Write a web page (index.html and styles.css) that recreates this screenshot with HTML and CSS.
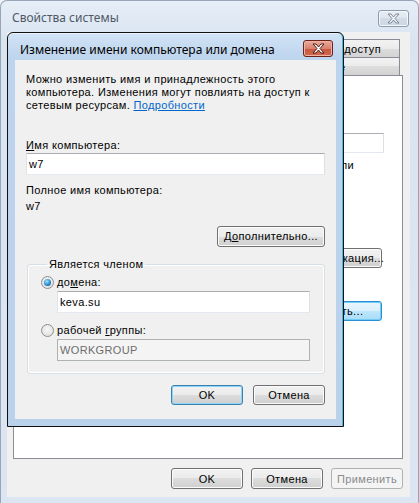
FILE: index.html
```html
<!DOCTYPE html>
<html lang="ru">
<head>
  <meta charset="UTF-8" />
  <title>Свойства системы</title>
  <link rel="stylesheet" href="styles.css">
</head>
<body>
  <!-- System properties window (inactive, behind) -->
  <div class="window sysprops">
    <div class="titlebar">
      <span class="title">Свойства системы</span>
      <span class="close close-idle">
        <svg width="13" height="11" viewBox="-1 -1 13 11"><polygon points="0,0 3,0 5.5,3 8,0 11,0 7,4.5 11,9 8,9 5.5,6 3,9 0,9 4,4.5" /></svg>
      </span>
    </div>
    <div class="client">
      <div class="tabs">
        <div class="tab-row">
          <span class="tab">Дополнительно</span>
          <span class="tab">Защита системы</span>
          <span class="tab">Удаленный доступ</span>
        </div>
        <div class="tab-row">
          <span class="tab selected">Имя компьютера</span>
          <span class="tab">Оборудование</span>
        </div>
      </div>
      <div class="panel">
        <div class="panel-text">Windows использует следующие сведения для<br>идентификации этого компьютера в сети.</div>
        <div class="panel-row">
          <span>Описание:</span>
          <span class="field desc-field"></span>
        </div>
        <div class="panel-hint">Например: "Компьютер в гостиной" или</div>
        <div class="panel-text">"Компьютер Андрея".</div>
        <div class="panel-pair first"><span>Полное имя:</span><span>w7.keva.su</span></div>
        <div class="panel-pair"><span>Домен:</span><span>keva.su</span></div>
        <div class="panel-action first">
          <div class="panel-text">Чтобы использовать мастер для<br>присоединения к домену, нажмите<br>кнопку "Идентификация".</div>
          <button class="btn wide">Идентификация...</button>
        </div>
        <div class="panel-action">
          <div class="panel-text">Чтобы переименовать компьютер<br>или изменить его домен, нажмите<br>кнопку "Изменить".</div>
          <button class="btn wide hot">Изменить...</button>
        </div>
      </div>
      <div class="buttons outer-buttons">
        <button class="btn">OK</button>
        <button class="btn">Отмена</button>
        <button class="btn" disabled>Применить</button>
      </div>
    </div>
  </div>

  <!-- Rename dialog (active, on top) -->
  <div class="window rename">
    <div class="titlebar">
      <span class="title">Изменение имени компьютера или домена</span>
      <span class="close close-active">
        <svg width="13" height="11" viewBox="-1 -1 13 11"><polygon points="0,0 3,0 5.5,3 8,0 11,0 7,4.5 11,9 8,9 5.5,6 3,9 0,9 4,4.5" /></svg>
      </span>
    </div>
    <div class="client rename-body">
      <p class="intro">Можно изменить имя и принадлежность этого<br>компьютера. Изменения могут повлиять на доступ к<br>сетевым ресурсам. <a href="#">Подробности</a></p>

      <label class="caption name-label"><u>И</u>мя компьютера:</label>
      <div class="field">w7</div>

      <div class="caption full-label">Полное имя компьютера:</div>
      <div class="caption full-value">w7</div>

      <div class="buttons more-row">
        <button class="btn more">Д<u>о</u>полнительно...</button>
      </div>

      <fieldset class="group">
        <legend>Является членом</legend>
        <div class="option first">
          <span class="radio checked"></span>
          <span>до<u>м</u>ена:</span>
        </div>
        <div class="field indent">keva.su</div>
        <div class="option">
          <span class="radio"></span>
          <span>рабочей <u>г</u>руппы:</span>
        </div>
        <div class="field indent disabled">WORKGROUP</div>
      </fieldset>

      <div class="buttons dialog-buttons">
        <button class="btn default">OK</button>
        <button class="btn">Отмена</button>
      </div>
    </div>
  </div>
</body>
</html>
```

FILE: styles.css
```css
* {
  box-sizing: border-box;
}

body {
  margin: 0;
  width: 419px;
  height: 503px;
  position: relative;
  overflow: hidden;
  background: #eef2f7;
  font: 11px 'Liberation Sans', Arial, sans-serif;
  letter-spacing: 0.35px;
  color: #000;
}

u {
  text-decoration: underline;
}

/* ---------- windows ---------- */

.window {
  position: absolute;
  display: flex;
  flex-direction: column;
}

.titlebar {
  display: flex;
  justify-content: space-between;
  align-items: flex-start;
  flex-shrink: 0;
}

.title {
  font-family: 'Noto Sans', 'Open Sans', sans-serif;
  font-size: 12px;
  letter-spacing: 0;
  white-space: nowrap;
}

.client {
  flex: 1;
  background: #f0f0f0;
  display: flex;
  flex-direction: column;
}

.sysprops {
  left: 0;
  top: 0;
  width: 419px;
  height: 503px;
  padding: 0 8px 6px 6px;
  background: linear-gradient(#e6eef7, #d9e4f1 40px, #dbe6f2);
  border: 1px solid #97a5b7;
  border-bottom: none;
  border-radius: 7px 7px 0 0;
}

.sysprops .titlebar {
  height: 31px;
}

.sysprops .title {
  color: #4f5965;
  padding: 8px 0 0 5px;
}

.rename {
  left: 7px;
  top: 32px;
  width: 337px;
  height: 395px;
  padding: 0 7px 7px 7px;
  background: linear-gradient(#d2e3f5, #bcd4ed 26px, #b9d1ea);
  border: 1px solid #111;
  border-radius: 6px 6px 0 0;
  box-shadow: inset -1px 0 #3dbde6, inset 0 1px #eaf2fb;
}

.rename .titlebar {
  height: 27px;
}

.rename .title {
  padding: 8px 0 0 5px;
}

/* ---------- caption buttons ---------- */

.close {
  width: 30px;
  height: 17px;
  border-radius: 3px;
  display: flex;
  align-items: center;
  justify-content: center;
}

.close-idle {
  width: 31px;
  margin: 9px 1px 0 0;
  border: 1px solid #8c9bad;
  background: linear-gradient(#e9eef4, #dde5ee 50%, #d2dce8 50%, #ccd7e4);
  box-shadow: inset 0 0 0 1px #f4f7fa;
}

.close-idle svg {
  fill: #f3f5f8;
  stroke: #7c8794;
}

.close-active {
  margin: 7px 3px 0 0;
  border: 1px solid #6b2118;
  background: linear-gradient(#e9a99b, #d9826f 50%, #c7553f 50%, #cf6a4f);
  box-shadow: inset 0 0 0 1px #efb3a5;
}

.close-active svg {
  fill: #fff;
  stroke: #4d1a12;
}

/* ---------- common controls ---------- */

.btn {
  font: inherit;
  letter-spacing: inherit;
  color: #000;
  height: 21px;
  width: 72px;
  padding: 0 4px;
  border: 1px solid #707070;
  border-radius: 3px;
  background: linear-gradient(#f2f2f2, #ebebeb 50%, #dddddd 50%, #cfcfcf);
  box-shadow: inset 0 0 0 1px #fbfbfb;
  white-space: nowrap;
}

.btn.default {
  border-color: #3c7fb1;
  box-shadow: inset 0 0 0 1px #8ad8f7;
}

.btn.hot {
  border-color: #2a8fd3;
  background: linear-gradient(#eaf6fd, #d9f0fc 50%, #bee6fd 50%, #a9dcf6);
  box-shadow: inset 0 0 0 1px #6fcdf7;
}

.btn:disabled {
  color: #8b8b8b;
  border-color: #adb2b5;
  background: #f4f4f4;
  box-shadow: none;
}

.field {
  height: 22px;
  padding: 0 2px;
  display: flex;
  align-items: center;
  background: #fff;
  border: 1px solid;
  border-color: #abadb3 #dbdfe6 #e3e9ef #e2e3ea;
}

.field.disabled {
  background: #f4f4f4;
  color: #6d6d6d;
  border-color: #adb2b5;
}

.buttons {
  display: flex;
  justify-content: flex-end;
  gap: 8px;
}

.radio {
  width: 13px;
  height: 13px;
  flex-shrink: 0;
  border-radius: 50%;
  border: 1px solid #8e8f8f;
  background: radial-gradient(circle at 50% 40%, #f6f6f6, #dcdcdc);
  display: flex;
  align-items: center;
  justify-content: center;
}

.radio.checked::after {
  content: "";
  width: 7px;
  height: 7px;
  border-radius: 50%;
  background: radial-gradient(circle at 40% 35%, #a4e4ff, #2a8ad0 55%, #0e4474);
}

/* ---------- outer window content ---------- */

.tabs {
  margin: 7px 10px 0 6px;
}

.tab-row {
  display: flex;
}

.tab {
  flex: 1 1 auto;
  height: 18px;
  padding: 0 6px;
  display: flex;
  align-items: center;
  justify-content: center;
  white-space: nowrap;
  border: 1px solid #898c95;
  border-bottom: none;
  margin-right: -1px;
  background: linear-gradient(#f3f3f3, #ebebeb 50%, #dddddd 50%, #d3d3d3);
}

.tab:last-child {
  margin-right: 0;
}

.tab.selected {
  background: #fff;
}

.panel {
  height: 384px;
  margin: 0 7px 0 6px;
  padding: 12px 18px 0 10px;
  background: #fff;
  border: 1px solid #898c95;
  line-height: 13px;
}

.panel-row {
  margin-top: 19px;
  display: flex;
  align-items: center;
  justify-content: space-between;
}

.desc-field {
  width: 250px;
  height: 20px;
}

.panel-hint {
  margin-top: 6px;
  text-align: right;
  padding-right: 30px;
}

.panel-pair {
  display: flex;
  gap: 40px;
}

.panel-pair.first {
  margin-top: 12px;
}

.panel-action {
  display: flex;
  align-items: flex-start;
  justify-content: space-between;
  margin-top: 14px;
}

.panel-action.first {
  margin-top: 17px;
}

.panel-action .btn {
  margin: 8px 2px 0 0;
  height: 20px;
}

.btn.wide {
  width: 100px;
}

.outer-buttons {
  margin: 9px 7px 0 0;
}

/* ---------- rename dialog content ---------- */

.rename-body {
  padding: 0 11px;
  line-height: 13px;
}

.intro {
  margin: 13px 0 0;
}

.intro a {
  color: #0066cc;
}

.caption {
  display: block;
}

.name-label {
  margin: 27px 0 1px;
}

.full-label {
  margin-top: 9px;
}

.full-value {
  margin-top: 3px;
}

.more-row {
  margin-top: 13px;
}

.btn.more {
  width: 108px;
}

.group {
  margin: 11px 0 0 1px;
  padding: 0 14px 12px 13px;
  border: 1px solid #d5dfe5;
  border-radius: 3px;
  box-shadow: inset 0 0 0 1px #fff;
}

.group legend {
  margin-left: 6px;
  padding: 0 2px;
}

.option {
  display: flex;
  align-items: center;
  gap: 3px;
  height: 13px;
  margin-top: 11px;
}

.option.first {
  margin-top: 5px;
}

.field.indent {
  margin: 2px 0 0 16px;
}

.dialog-buttons {
  margin-top: 11px;
  gap: 10px;
}

.dialog-buttons .btn {
  height: 20px;
}
```
